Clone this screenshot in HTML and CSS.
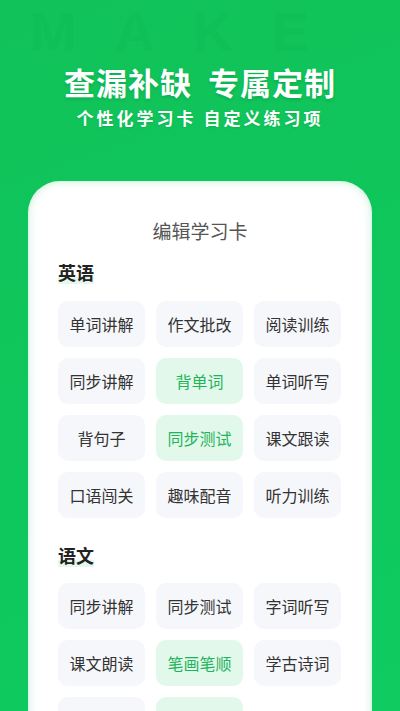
FILE: index.html
```html
<!DOCTYPE html>
<html lang="zh-CN">
<head>
    <meta charset="UTF-8">
    <title>编辑学习卡</title>
    <link rel="stylesheet" href="styles.css">
</head>
<body>
    <div class="page">
        <div class="bg-word" aria-hidden="true">MAKE</div>
        <div class="header">
            <h1 class="headline">查漏补缺&nbsp;&nbsp;专属定制</h1>
            <p class="subline">个性化学习卡 自定义练习项</p>
        </div>

        <div class="card">
            <h2 class="card-title">编辑学习卡</h2>

            <h3 class="subject"><span>英语</span></h3>
            <div class="tiles">
                <div class="tile">单词讲解</div>
                <div class="tile">作文批改</div>
                <div class="tile">阅读训练</div>
                <div class="tile">同步讲解</div>
                <div class="tile active">背单词</div>
                <div class="tile">单词听写</div>
                <div class="tile">背句子</div>
                <div class="tile active">同步测试</div>
                <div class="tile">课文跟读</div>
                <div class="tile">口语闯关</div>
                <div class="tile">趣味配音</div>
                <div class="tile">听力训练</div>
            </div>

            <h3 class="subject second"><span>语文</span></h3>
            <div class="tiles">
                <div class="tile">同步讲解</div>
                <div class="tile">同步测试</div>
                <div class="tile">字词听写</div>
                <div class="tile">课文朗读</div>
                <div class="tile active">笔画笔顺</div>
                <div class="tile">学古诗词</div>
                <div class="tile"></div>
                <div class="tile active"></div>
            </div>
        </div>
    </div>
</body>
</html>
```

FILE: styles.css
```css
body {
    margin: 0;
    font-family: "Noto Sans CJK SC", "Noto Sans", sans-serif;
}
.page {
    position: relative;
    width: 400px;
    height: 711px;
    overflow: hidden;
    background: linear-gradient(160deg, #10c259 0%, #0fc75c 50%, #0fcb60 100%);
}
.bg-word {
    position: absolute;
    top: 4px;
    left: 30px;
    font-family: "Liberation Sans", sans-serif;
    font-weight: bold;
    font-size: 56px;
    line-height: 56px;
    letter-spacing: 38px;
    color: rgba(0, 90, 30, 0.03);
}
.header {
    position: relative;
    padding-top: 64px;
    text-align: center;
    color: #fff;
}
.headline {
    margin: 0;
    font-size: 31px;
    line-height: 36px;
    font-weight: bold;
    letter-spacing: 1px;
    text-shadow: 0 2px 3px rgba(0, 80, 30, 0.18);
}
.subline {
    margin: 6px 0 0;
    font-size: 17px;
    line-height: 24px;
    font-weight: bold;
    letter-spacing: 3px;
    text-shadow: 0 1px 2px rgba(0, 80, 30, 0.15);
}
.card {
    position: relative;
    margin: 51px 28px 0;
    height: 600px;
    padding: 37px 30px 0;
    background: #fff;
    border-radius: 32px;
    box-shadow: inset 0 0 8px rgba(20, 190, 90, 0.28);
}
.card-title {
    margin: 0;
    text-align: center;
    font-size: 19px;
    line-height: 26px;
    font-weight: normal;
    color: #555;
}
.subject {
    margin: 15px 0 16px;
    font-size: 18px;
    line-height: 26px;
    font-weight: bold;
    color: #222;
}
.subject span {
    background: linear-gradient(to bottom, transparent 68%, #e4f8ed 68%, #e4f8ed 95%, transparent 95%);
}
.subject.second {
    margin-top: 24px;
    margin-bottom: 15px;
}
.tiles {
    display: grid;
    grid-template-columns: repeat(3, 87px);
    gap: 11px;
}
.tile {
    height: 46px;
    line-height: 46px;
    text-align: center;
    background: #f6f7fb;
    border-radius: 10px;
    font-size: 16px;
    color: #333;
}
.tile.active {
    background: #e2f8eb;
    color: #1fb45a;
}
```
